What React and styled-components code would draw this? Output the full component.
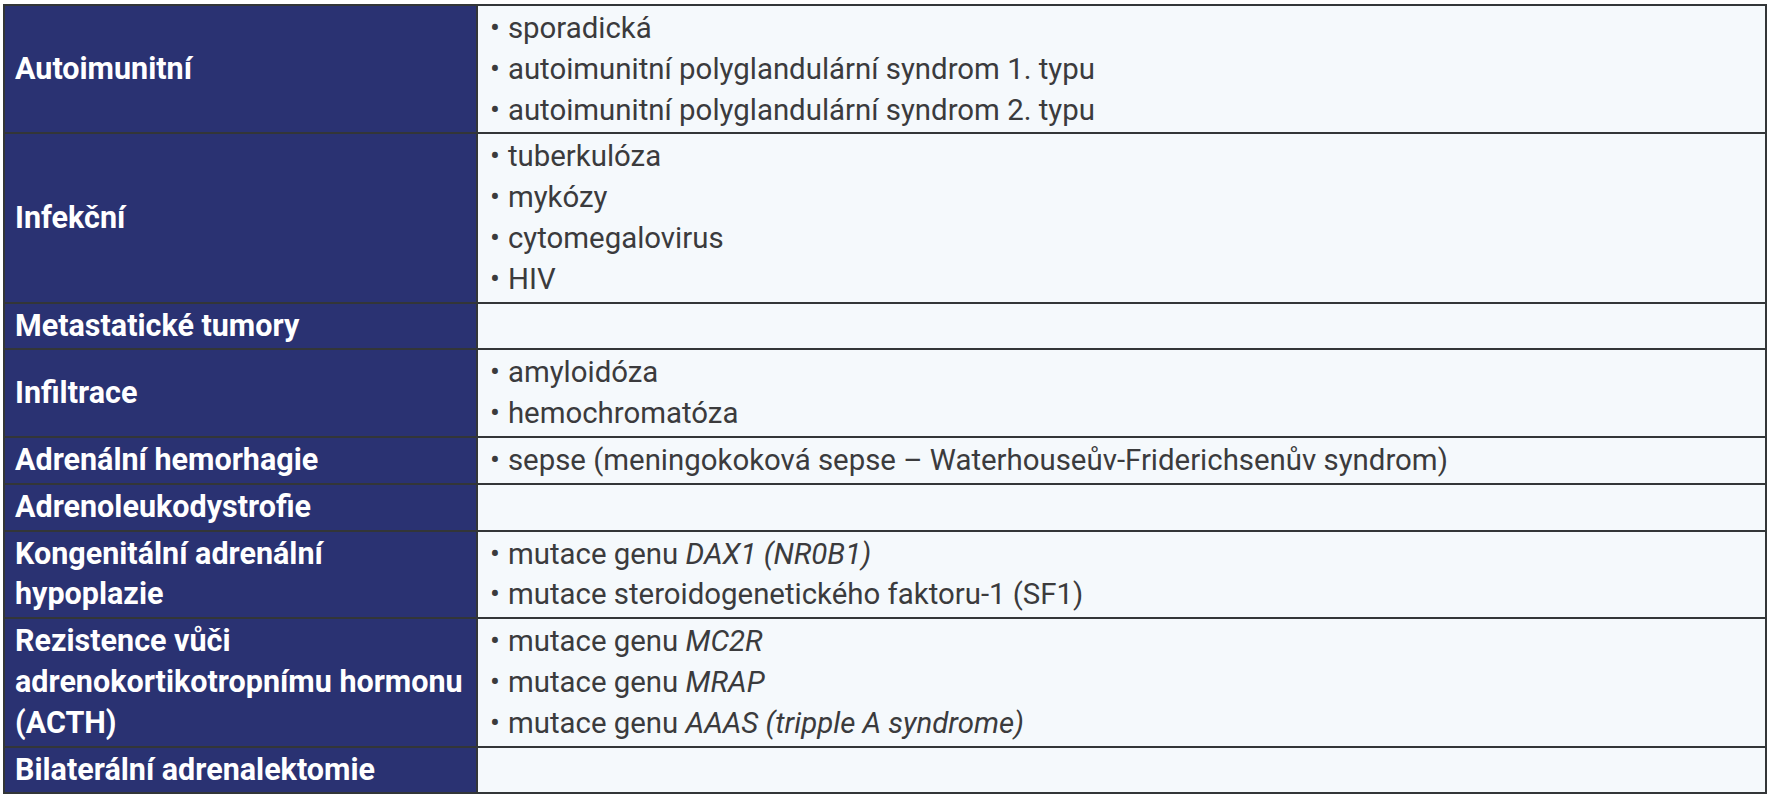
import React from 'react';
import styled, { createGlobalStyle } from 'styled-components';

const GlobalStyle = createGlobalStyle`
  html, body {
    margin: 0;
    padding: 0;
    background: #ffffff;
  }
`;

const Page = styled.div`
  padding: 4px 0 0 3px;
`;

const Table = styled.table`
  width: 1764px;
  border-collapse: collapse;
  table-layout: fixed;
  border: 2px solid #333638;
  font-family: Roboto, "Liberation Sans", sans-serif;
`;

const Head = styled.th`
  width: 455px;
  background: #2a3272;
  color: #ffffff;
  font-size: 30.5px;
  font-weight: 700;
  line-height: 40.8px;
  text-align: left;
  vertical-align: middle;
  white-space: nowrap;
  overflow: hidden;
  padding: 2px 6px 2px 10px;
  border: 2px solid #333638;
`;

const Body = styled.td`
  background: #f5f9fc;
  color: #3b3b3d;
  font-size: 29.4px;
  font-weight: 400;
  line-height: 40.8px;
  vertical-align: middle;
  padding: 2px 12px;
  border: 2px solid #333638;
`;

const Item = styled.div`
  white-space: nowrap;
  &::before {
    content: '•';
    margin-right: 8px;
  }
`;

const Gene = styled.i`
  font-style: italic;
`;

const rows = [
  {
    head: ['Autoimunitní'],
    items: [
      'sporadická',
      'autoimunitní polyglandulární syndrom 1. typu',
      'autoimunitní polyglandulární syndrom 2. typu',
    ],
  },
  {
    head: ['Infekční'],
    items: ['tuberkulóza', 'mykózy', 'cytomegalovirus', 'HIV'],
  },
  { head: ['Metastatické tumory'], items: [] },
  { head: ['Infiltrace'], items: ['amyloidóza', 'hemochromatóza'] },
  {
    head: ['Adrenální hemorhagie'],
    items: ['sepse (meningokoková sepse – Waterhouseův-Friderichsenův syndrom)'],
  },
  { head: ['Adrenoleukodystrofie'], items: [] },
  {
    head: ['Kongenitální adrenální', 'hypoplazie'],
    items: [
      <>mutace genu <Gene>DAX1 (NR0B1)</Gene></>,
      'mutace steroidogenetického faktoru-1 (SF1)',
    ],
  },
  {
    head: ['Rezistence vůči', 'adrenokortikotropnímu hormonu', '(ACTH)'],
    items: [
      <>mutace genu <Gene>MC2R</Gene></>,
      <>mutace genu <Gene>MRAP</Gene></>,
      <>mutace genu <Gene>AAAS (tripple A syndrome)</Gene></>,
    ],
  },
  { head: ['Bilaterální adrenalektomie'], items: [] },
];

const App = () => (
  <Page>
    <GlobalStyle />
    <Table>
      <tbody>
        {rows.map((row, i) => (
          <tr key={i}>
            <Head>
              {row.head.map((line, j) => (
                <React.Fragment key={j}>
                  {j > 0 && <br />}
                  {line}
                </React.Fragment>
              ))}
            </Head>
            <Body>
              {row.items.map((item, j) => (
                <Item key={j}>{item}</Item>
              ))}
            </Body>
          </tr>
        ))}
      </tbody>
    </Table>
  </Page>
);

export default App;
